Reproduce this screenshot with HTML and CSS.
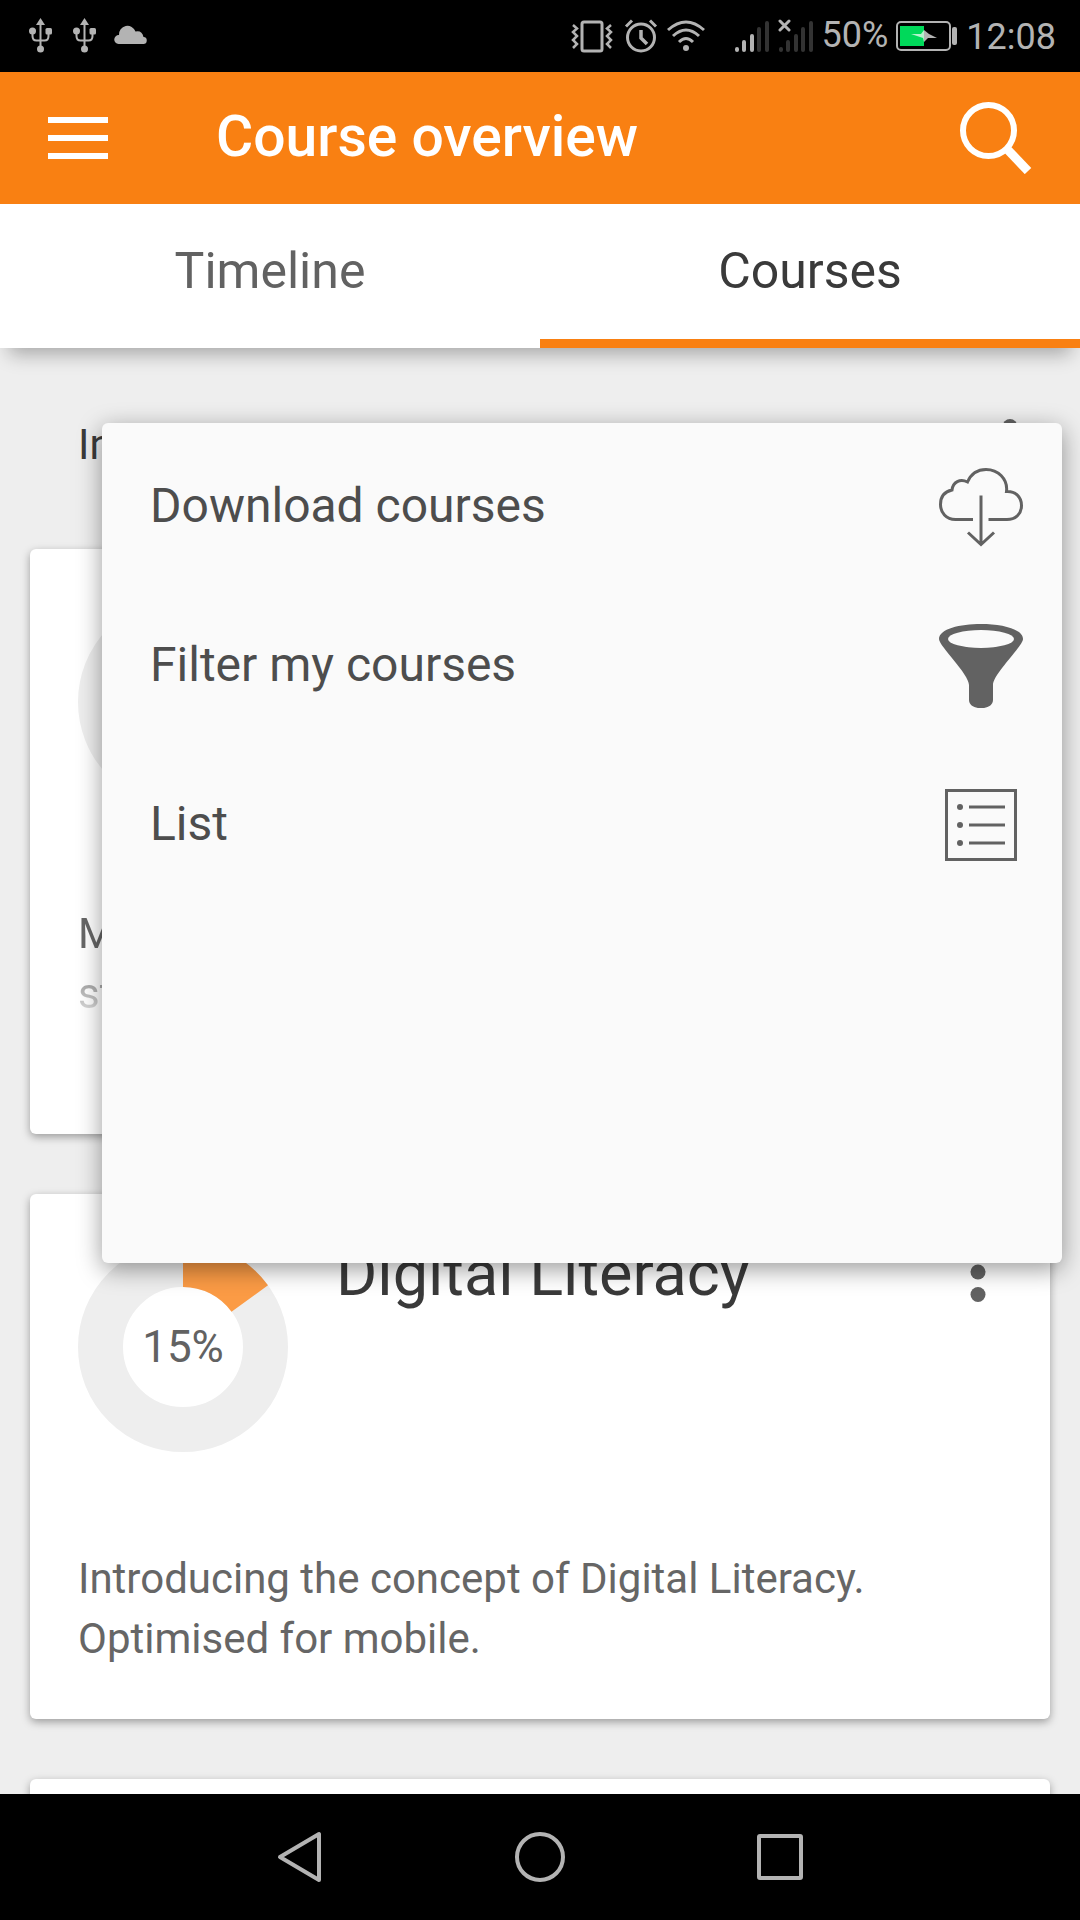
FILE: index.html
```html
<!DOCTYPE html>
<html lang="en">
<head>
<meta charset="utf-8">
<meta name="viewport" content="width=device-width, initial-scale=1">
<title>Course overview</title>
<link rel="stylesheet" href="styles.css">
</head>

<body>
<!-- icons used more than once -->
<svg class="sprite" aria-hidden="true">
<symbol id="usb" viewBox="0 0 30 36">
<path d="M14.500 0l4.500 7h-9z" fill="#b3b3b3"/>
<path d="M14.500 5v25M6.500 14v4q0 4.500 4 4.500h8q4 0 4-4.500v-4" fill="none" stroke="#b3b3b3" stroke-width="2"/>
<circle cx="6.500" cy="13" r="3.500" fill="#b3b3b3"/>
<rect x="19.500" y="10" width="6.500" height="6.500" rx="1.500" fill="#b3b3b3"/>
<circle cx="14.500" cy="31" r="3.500" fill="#b3b3b3"/>
</symbol>
<symbol id="dots" viewBox="0 0 16 60">
<circle cx="8" cy="7.500" r="7.500"/>
<circle cx="8" cy="30" r="7.500"/>
<circle cx="8" cy="52.500" r="7.500"/>
</symbol>
</svg>

<div class="statusBar">
<div class="statusLeft">
<svg width="30" height="36"><use href="#usb"/></svg>
<svg width="30" height="36"><use href="#usb"/></svg>
<svg width="34" height="36" fill="#b3b3b3"><path d="M4.500 26a4.500 4.500 0 0 1 .5-9a8.500 8.500 0 0 1 16.500-3.500q6.500-1.500 8 5.500a3.500 3.500 0 0 1-.5 7z"/></svg>
</div>
<div class="statusRight">
<svg width="44" height="36" fill="none" stroke="#b3b3b3"><rect x="12" y="4" width="20" height="29" rx="2" stroke-width="3"/><path d="M3 7l4 3.500-4 3.500 4 4-4 4 4 4-4 4M41 7l-4 3.500 4 3.500-4 4 4 4-4 4 4 4" stroke-width="2.500"/></svg>
<svg width="36" height="36" fill="none" stroke="#b3b3b3" stroke-width="3"><circle cx="19" cy="19.500" r="13.500"/><path d="M19 12v8l6 6" stroke-width="3.500"/><path d="M4 8.500l6-6M34 8.500l-6-6"/></svg>
<svg width="40" height="36" fill="none" stroke="#b3b3b3" stroke-width="3"><path d="M2 12q18-16 36 0M7 18q13-12 26 0M13 24q7-7 14 0"/><circle cx="20" cy="30" r="3" fill="#b3b3b3" stroke="none"/></svg>
<svg class="signal" width="36" height="36" fill="none" stroke="#b3b3b3" stroke-width="4" stroke-linecap="round"><path d="M3 31v1M10 24v8M18 18v14"/><path d="M25 11v21M33 5v27" stroke="#333"/></svg>
<svg width="36" height="36" fill="none" stroke="#333" stroke-width="4" stroke-linecap="round"><path d="M3 31v1M10 24v8M18 18v14M25 11v21M33 5v27"/><path d="M2 3l9 9M11 3l-9 9" stroke="#b3b3b3" stroke-width="3"/></svg>
<span class="percent">50%</span>
<svg width="62" height="36"><rect x="1" y="4" width="53" height="28" rx="4" fill="none" stroke="#b3b3b3" stroke-width="2"/><rect x="4" y="8" width="24" height="20" fill="#00d95a"/><path d="M28 12l5 4 8 4h-9l-4 4z" fill="#b3b3b3"/><path d="M15 16h10l3-4v12l-1-4z" fill="#b3f4cd"/><rect x="56" y="9" width="5" height="18" rx="2" fill="#b3b3b3"/></svg>
<span class="clock">12:08</span>
</div>
</div>

<header class="header">
<button class="iconButton" aria-label="Menu">
<svg width="60" height="42" fill="#fff"><rect width="60" height="6"/><rect y="18" width="60" height="6"/><rect y="36" width="60" height="6"/></svg>
</button>
<h1>Course overview</h1>
<button class="iconButton" aria-label="Search">
<svg width="72" height="72" fill="none" stroke="#fff"><circle cx="28.500" cy="28.500" r="25.500" stroke-width="6"/><path d="M46 46l22 23" stroke-width="9"/></svg>
</button>
</header>

<nav class="tabs">
<a href="#timeline">Timeline</a>
<a href="#courses" class="active">Courses</a>
</nav>

<main class="content">
<div class="filterRow">
<select class="filter" aria-label="Filter courses">
<option>In progress</option>
</select>
<button class="iconButton" aria-label="Options"><svg class="dots" width="16" height="60"><use href="#dots"/></svg></button>
</div>

<section class="card">
<div class="cardTop">
<div class="progress">
<svg width="210" height="210" viewBox="0 0 210 210"><circle cx="105" cy="105" r="82.500" fill="none" stroke="#eee" stroke-width="45"/></svg>
</div>
</div>
<p class="summary faded">M<br>st<br>&nbsp;</p>
</section>

<section class="card">
<div class="cardTop">
<div class="progress">
<svg width="210" height="210" viewBox="0 0 210 210"><circle cx="105" cy="105" r="82.500" fill="none" stroke="#eee" stroke-width="45"/><path d="M105 0A105 105 0 0 1 190 43.300L153.500 69.700A60 60 0 0 0 105 45z" fill="#fb9b45"/></svg>
<span>15%</span>
</div>
<h2>Digital Literacy</h2>
<button class="iconButton" aria-label="Course options"><svg class="dots" width="16" height="60"><use href="#dots"/></svg></button>
</div>
<p class="summary">Introducing the concept of Digital Literacy. Optimised for mobile.</p>
</section>

<section class="card">
<div class="cardTop"></div>
</section>

<div class="popover">
<button class="option">
<span>Download courses</span>
<svg width="84" height="84" fill="none" stroke="#626262" stroke-width="3"><path d="M34 54.500H16.500C7 54.500 1.500 47.500 1.500 39.500C1.500 31.500 6 26.500 13 25C14 17 21 13.500 28.500 17C32 9 39 4.500 47 4.500C59 4.500 69 14 67.500 26.500C76.500 26 82.500 32 82.500 40.500C82.500 48.500 77 54.500 68 54.500H49.500"/><path d="M42 30.500v49M29 67.500l13 12 13-12"/></svg>
</button>
<button class="option">
<span>Filter my courses</span>
<svg width="84" height="84"><path d="M0 15C0-5 84-5 84 15C84 22 54 50 54 61V76C54 87 30 87 30 76V61C30 50 0 22 0 15Z" fill="#626262"/><ellipse cx="42" cy="15" rx="33" ry="9" fill="#fafafa"/></svg>
</button>
<button class="option">
<span>List</span>
<svg width="84" height="84" fill="none" stroke="#626262" stroke-width="3"><path d="M7.500 7.500h69v69h-69zM30 24h36M30 42h36M30 60h36"/><g fill="#626262" stroke="none"><circle cx="21" cy="24" r="3"/><circle cx="21" cy="42" r="3"/><circle cx="21" cy="60" r="3"/></g></svg>
</button>
</div>
</main>

<footer class="navBar">
<button class="iconButton" aria-label="Back"><svg width="54" height="54" fill="none" stroke="#b3b3b3" stroke-width="4" stroke-linejoin="round"><path d="M46 4v46L7 27z"/></svg></button>
<button class="iconButton" aria-label="Home"><svg width="54" height="54" fill="none" stroke="#b3b3b3" stroke-width="4"><circle cx="27" cy="27" r="23"/></svg></button>
<button class="iconButton" aria-label="Recent apps"><svg width="54" height="54" fill="none" stroke="#b3b3b3" stroke-width="4"><rect x="6" y="6" width="42" height="42" rx="1"/></svg></button>
</footer>
</body>
</html>
```
FILE: styles.css
```css
* {
box-sizing: border-box;
}

body {
margin: 0;
height: 100vh;
display: flex;
flex-direction: column;
background: #eee;
color: #3a3a3a;
font-family: Roboto, sans-serif;
}

svg {
display: block;
flex: none;
}

.sprite {
position: absolute;
width: 0;
height: 0;
}

button, select {
border: 0;
padding: 0;
background: none;
font-family: inherit;
color: inherit;
}

.iconButton {
flex: none;
}

.dots {
fill: #626262;
}

/* status bar */
.statusBar {
flex: none;
height: 72px;
padding: 0 24px 0 26px;
display: flex;
justify-content: space-between;
align-items: center;
background: #000;
color: #b3b3b3;
font-size: 36px;
}

.statusLeft, .statusRight {
display: flex;
align-items: center;
gap: 14px;
}

.statusRight {
gap: 8px;
}

.signal {
margin-left: 20px;
}

.percent {
padding-bottom: 2px;
}

.clock {
padding-top: 2px;
}

/* title bar */
.header {
flex: none;
height: 132px;
padding: 0 48px;
display: flex;
align-items: center;
background: #f98012;
color: #fff;
}

.header h1 {
flex: 1;
margin: 0 0 0 108px;
padding-bottom: 2px;
font-size: 57px;
font-weight: 500;
line-height: 66px;
}

.tabs {
flex: none;
display: flex;
position: relative;
z-index: 1;
background: #fff;
box-shadow: 0 15px 18px -9px rgba(0, 0, 0, 0.3);
}

.tabs a {
flex: 1;
height: 144px;
border-bottom: 9px solid transparent;
line-height: 135px;
text-align: center;
font-size: 50px;
color: #626262;
text-decoration: none;
}

.tabs a.active {
border-color: #f98012;
color: #3a3a3a;
}

/* course list */
.content {
flex: 1;
min-height: 0;
position: relative;
overflow: hidden;
}

.filterRow {
height: 201px;
padding: 0 62px 0 78px;
display: flex;
justify-content: space-between;
align-items: center;
}

.filter {
appearance: none;
padding-bottom: 8px;
font-size: 42px;
}

.card {
margin: 0 30px 60px;
padding: 48px 48px 50px;
border-radius: 6px;
background: #fff;
box-shadow: 0 3px 9px rgba(0, 0, 0, 0.35);
}

.cardTop {
min-height: 210px;
display: flex;
align-items: flex-start;
padding-right: 16px;
}

.cardTop h2 {
flex: 1;
margin: 0 0 0 48px;
font-size: 63px;
font-weight: 400;
line-height: 64px;
}

.progress {
display: grid;
place-items: center;
font-size: 44px;
color: #626262;
}

.progress svg, .progress span {
grid-area: 1 / 1;
}

.summary {
margin: 97px 0 0;
font-size: 42px;
line-height: 60px;
color: #666;
}

.faded {
color: transparent;
background: linear-gradient(#666 25%, #ccc 55%, #fff 70%);
-webkit-background-clip: text;
background-clip: text;
}

/* options menu over the list */
.popover {
position: absolute;
top: 75px;
left: 102px;
right: 18px;
height: 840px;
padding-top: 4px;
border-radius: 6px;
background: #fafafa;
box-shadow: 0 6px 24px rgba(0, 0, 0, 0.4);
}

.option {
width: 100%;
height: 159px;
padding: 0 39px 0 48px;
display: flex;
justify-content: space-between;
align-items: center;
font-size: 48px;
color: #4d4d4d;
}

.option span {
padding-bottom: 2px;
}

/* android buttons */
.navBar {
flex: none;
height: 126px;
display: flex;
justify-content: center;
align-items: center;
gap: 186px;
background: #000;
}
```
